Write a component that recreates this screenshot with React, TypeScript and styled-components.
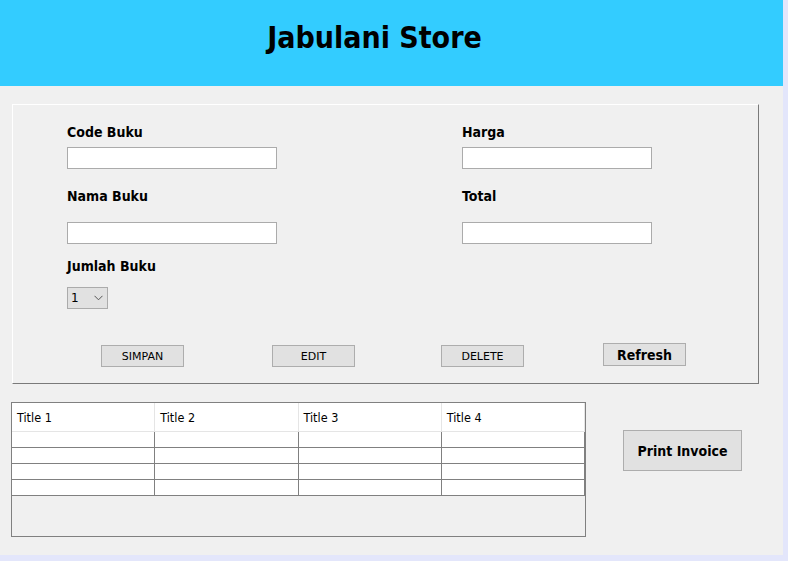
import React from 'react';
import styled, { createGlobalStyle } from 'styled-components';

const GlobalStyle = createGlobalStyle`
  html, body {
    margin: 0;
    padding: 0;
    background: #e3e6fb;
  }
  * {
    box-sizing: border-box;
  }
`;

const columns = ['Title 1', 'Title 2', 'Title 3', 'Title 4'];
const rows = [0, 1, 2, 3];

const App: React.FC = () => {
  return (
    <>
      <GlobalStyle />
      <Frame>
        <Header>
          <Title>Jabulani Store</Title>
        </Header>
        <Content>
          <Panel>
            <Form>
              <Field $top={19} $gap={7}>
                <Label>Code Buku</Label>
                <TextInput $width={210} />
              </Field>
              <Field $top={19} $gap={7}>
                <Label>Harga</Label>
                <TextInput $width={190} />
              </Field>
              <Field $top={19} $gap={18}>
                <Label>Nama Buku</Label>
                <TextInput $width={210} />
              </Field>
              <Field $top={19} $gap={18}>
                <Label>Total</Label>
                <TextInput $width={190} />
              </Field>
              <Field $top={14} $gap={13}>
                <Label>Jumlah Buku</Label>
                <Select>
                  <span>1</span>
                  <svg width="9" height="6" viewBox="0 0 9 6">
                    <path d="M0.5 0.8 L4.5 4.8 L8.5 0.8" fill="none" stroke="#555" strokeWidth="1" />
                  </svg>
                </Select>
              </Field>
            </Form>
            <ButtonRow>
              <Button $offset={88}>SIMPAN</Button>
              <Button $offset={88}>EDIT</Button>
              <Button $offset={86}>DELETE</Button>
              <Button $offset={79} $bold>
                Refresh
              </Button>
            </ButtonRow>
          </Panel>
          <Bottom>
            <Table>
              <HeadRow>
                {columns.map((title) => (
                  <HeadCell key={title}>{title}</HeadCell>
                ))}
              </HeadRow>
              {rows.map((r) => (
                <BodyRow key={r}>
                  {columns.map((c) => (
                    <BodyCell key={c} />
                  ))}
                </BodyRow>
              ))}
            </Table>
            <PrintButton>Print Invoice</PrintButton>
          </Bottom>
        </Content>
      </Frame>
    </>
  );
};

const Frame = styled.div`
  width: 783px;
  height: 555px;
  background: #f0f0f0;
  display: flex;
  flex-direction: column;
  font-family: 'DejaVu Sans Condensed', 'DejaVu Sans', sans-serif;
  color: #000;
`;

const Header = styled.div`
  height: 86px;
  background: #33ccff;
  display: flex;
  justify-content: center;
  align-items: flex-start;
  padding: 23px 34px 0 0;
`;

const Title = styled.h1`
  margin: 0;
  font-size: 30px;
  line-height: 30px;
  font-weight: bold;
`;

const Content = styled.div`
  display: flex;
  flex-direction: column;
  padding: 18px 0 0 11px;
`;

const Panel = styled.div`
  margin-left: 1px;
  width: 747px;
  height: 280px;
  border-top: 1px solid #ffffff;
  border-left: 1px solid #ffffff;
  border-right: 1px solid #7a7a7a;
  border-bottom: 1px solid #7a7a7a;
  display: flex;
  flex-direction: column;
`;

const Form = styled.div`
  display: grid;
  grid-template-columns: 395px 1fr;
  padding-left: 54px;
`;

const Field = styled.div<{ $top: number; $gap: number }>`
  display: flex;
  flex-direction: column;
  align-items: flex-start;
  margin-top: ${(p) => p.$top}px;
  gap: ${(p) => p.$gap}px;
`;

const Label = styled.label`
  font-size: 14px;
  line-height: 16px;
  font-weight: bold;
`;

const TextInput = styled.input<{ $width: number }>`
  width: ${(p) => p.$width}px;
  height: 22px;
  border: 1px solid #ababab;
  background: #fff;
  margin: 0;
  padding: 0 3px;
  outline: none;
`;

const Select = styled.div`
  width: 41px;
  height: 22px;
  border: 1px solid #ababab;
  background: #e1e1e1;
  display: flex;
  align-items: center;
  justify-content: space-between;
  padding: 0 4px 0 3px;
  font-family: 'DejaVu Sans', sans-serif;
  font-size: 12px;
`;

const ButtonRow = styled.div`
  display: flex;
  align-items: flex-start;
  margin-top: 36px;
`;

const Button = styled.button<{ $offset: number; $bold?: boolean }>`
  margin: ${(p) => (p.$bold ? '-2px' : '0')} 0 0 ${(p) => p.$offset}px;
  width: 83px;
  height: ${(p) => (p.$bold ? 23 : 22)}px;
  padding: 0;
  border: 1px solid #adadad;
  background: #e1e1e1;
  color: #000;
  font-family: ${(p) => (p.$bold ? "'DejaVu Sans Condensed', sans-serif" : "'DejaVu Sans', sans-serif")};
  font-size: ${(p) => (p.$bold ? 14 : 11)}px;
  font-weight: ${(p) => (p.$bold ? 'bold' : 'normal')};
`;

const Bottom = styled.div`
  display: flex;
  align-items: flex-start;
  margin-top: 18px;
`;

const Table = styled.div`
  width: 575px;
  height: 135px;
  border: 1px solid #808080;
  background: #f0f0f0;
  display: flex;
  flex-direction: column;
`;

const HeadRow = styled.div`
  display: grid;
  grid-template-columns: repeat(4, 1fr);
  height: 29px;
`;

const HeadCell = styled.div`
  background: #fff;
  border-right: 1px solid #e5e5e5;
  border-bottom: 1px solid #e5e5e5;
  display: flex;
  align-items: center;
  padding-left: 5px;
  font-size: 12.5px;
`;

const BodyRow = styled.div`
  display: grid;
  grid-template-columns: repeat(4, 1fr);
  height: 16px;
`;

const BodyCell = styled.div`
  background: #fff;
  border-right: 1px solid #808080;
  border-bottom: 1px solid #808080;
`;

const PrintButton = styled.button`
  margin: 28px 0 0 37px;
  width: 119px;
  height: 41px;
  padding: 0;
  border: 1px solid #adadad;
  background: #e1e1e1;
  color: #000;
  font-family: 'DejaVu Sans Condensed', sans-serif;
  font-size: 14px;
  font-weight: bold;
`;

export default App;
